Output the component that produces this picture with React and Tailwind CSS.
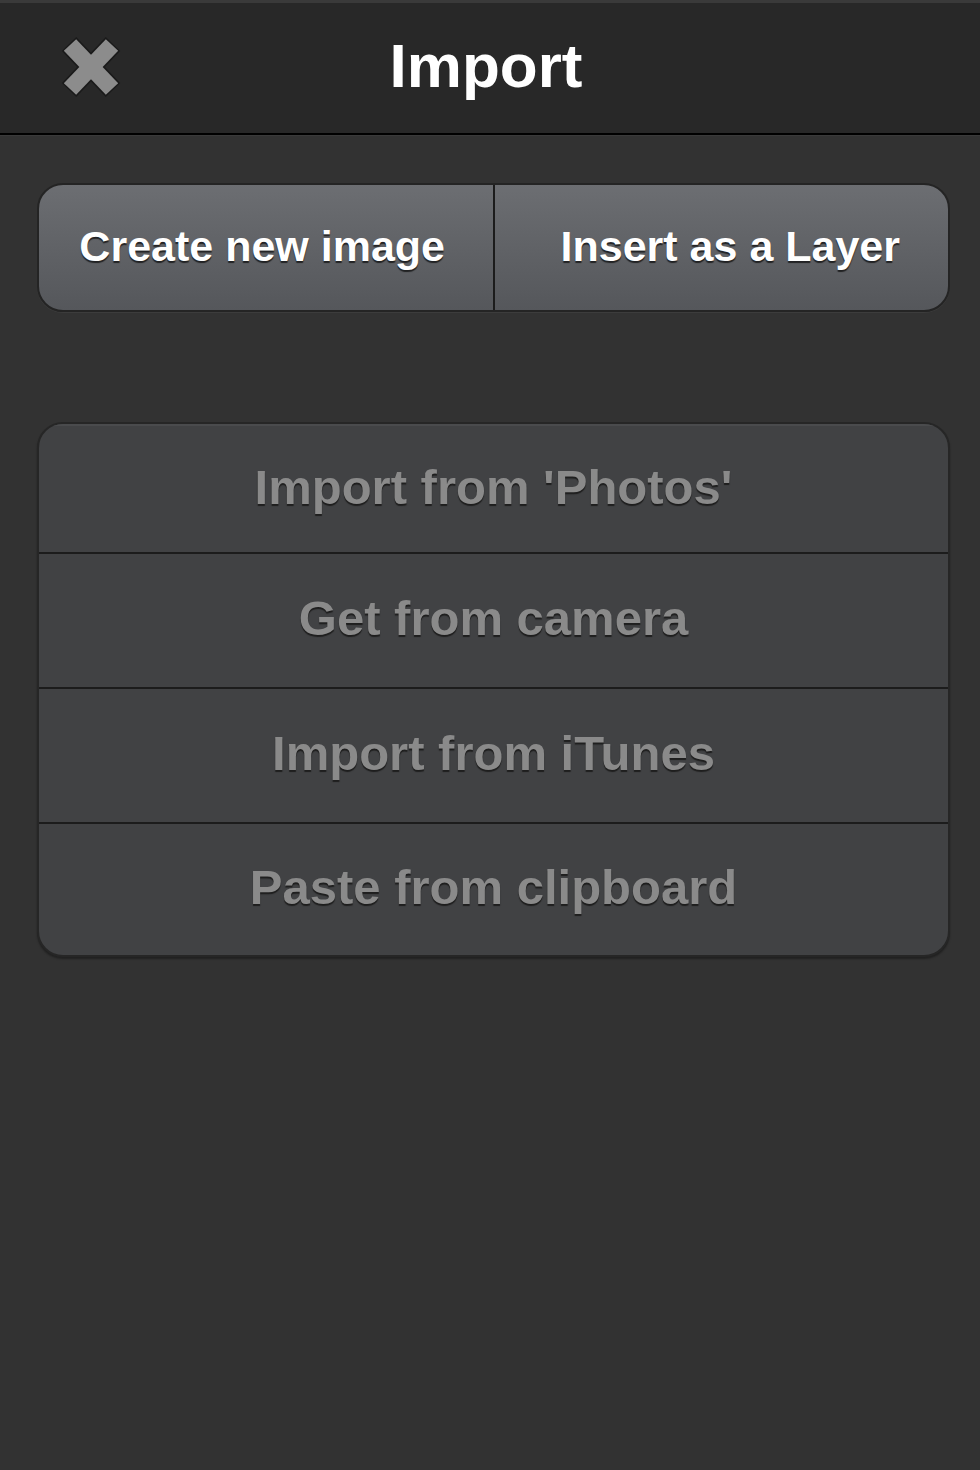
import React from "react";

const font = { fontFamily: '"Liberation Sans", Arial, Helvetica, sans-serif' };

function CloseIcon() {
  return (
    <svg width="60" height="62" viewBox="0 0 60 62" className="block">
      <g strokeLinecap="butt">
        <line x1="8" y1="8" x2="52" y2="54" stroke="#1a1a1a" strokeWidth="20" />
        <line x1="52" y1="8" x2="8" y2="54" stroke="#1a1a1a" strokeWidth="20" />
        <line x1="9" y1="9" x2="51" y2="53" stroke="#8c8c8c" strokeWidth="17" />
        <line x1="51" y1="9" x2="9" y2="53" stroke="#8c8c8c" strokeWidth="17" />
      </g>
    </svg>
  );
}

export default function App() {
  const rows = [
    { t: "Import from 'Photos'", h: "h-[128px]" },
    { t: "Get from camera", h: "h-[135px]" },
    { t: "Import from iTunes", h: "h-[135px]" },
    { t: "Paste from clipboard", h: "h-[133px]" },
  ];
  return (
    <div className="w-[980px] h-[1470px] bg-[#323232] overflow-hidden" style={font}>
      {/* Header */}
      <div className="h-[133px] bg-[#282828] border-t-[3px] border-[#3a3a3a] flex items-center relative">
        <div className="absolute left-[61px] top-[33px]">
          <CloseIcon />
        </div>
        <div className="flex-1 text-center text-white font-bold text-[62px] leading-none pr-[8px] -mt-[4px]">
          Import
        </div>
      </div>
      <div className="h-[2px] bg-black" />
      <div className="h-[1px] bg-[#3a3a3a]" />

      {/* Segmented control */}
      <div className="mt-[47px] ml-[37px] w-[913px] h-[129px] rounded-[26px] border-2 border-[#242424] bg-gradient-to-b from-[#6c6e72] to-[#55575b] flex overflow-hidden shadow-[0_1px_0_#3c3c3c]">
        <div className="w-[456px] flex items-center justify-end pr-[48px] border-r-2 border-[#1c1c1c]">
          <span className="text-white font-bold text-[43px] leading-none -mt-[3px] [text-shadow:0_2px_1px_rgba(0,0,0,0.65)]">
            Create new image
          </span>
        </div>
        <div className="flex-1 flex items-center justify-end pr-[48px]">
          <span className="text-white font-bold text-[43px] leading-none -mt-[3px] [text-shadow:0_2px_1px_rgba(0,0,0,0.65)]">
            Insert as a Layer
          </span>
        </div>
      </div>

      {/* List */}
      <div className="mt-[110px] ml-[37px] w-[913px] rounded-[26px] border-2 border-[#262626] bg-[#414244] overflow-hidden shadow-[0_2px_2px_rgba(0,0,0,0.35)]">
        {rows.map((r, i) => (
          <div
            key={r.t}
            className={
              r.h +
              " flex items-center justify-center border-t-[2px] " +
              (i === 0 ? "border-[#4a4b4d]" : "border-[#1c1c1c]")
            }
          >
            <span className="text-[#8a8a8a] font-bold text-[49px] leading-none -mt-[4px] [text-shadow:0_2px_1px_#1e1e1e]">
              {r.t}
            </span>
          </div>
        ))}
      </div>
    </div>
  );
}
